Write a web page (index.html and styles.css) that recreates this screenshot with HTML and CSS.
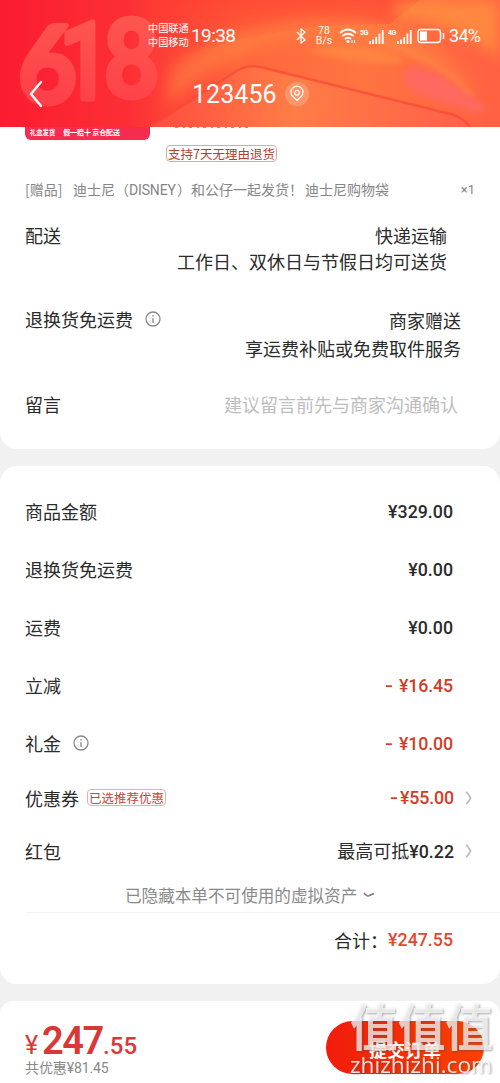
FILE: index.html
```html
<!DOCTYPE html>
<html lang="zh-CN">
<head>
<meta charset="utf-8">
<title>提交订单</title>
<link rel="stylesheet" href="styles.css">
</head>
<body>
<main class="screen">
  <header class="header">
    <svg class="header-art" viewBox="0 0 500 127" preserveAspectRatio="none" aria-hidden="true">
      <defs>
        <linearGradient id="base" x1="0" y1="0" x2="1" y2="0">
          <stop offset="0" stop-color="#fb1c30"/><stop offset=".26" stop-color="#fc2f35"/>
          <stop offset=".48" stop-color="#ff663c"/><stop offset=".72" stop-color="#ff7441"/><stop offset="1" stop-color="#ff6042"/>
        </linearGradient>
        <linearGradient id="top" x1="0" y1="0" x2="0" y2="1">
          <stop offset="0" stop-color="#ff3b30" stop-opacity=".6"/><stop offset="1" stop-color="#ff4034" stop-opacity="0"/>
        </linearGradient>
        <linearGradient id="panel" x1="0" y1="0" x2="1" y2="0">
          <stop offset="0" stop-color="#ff4b3e"/><stop offset=".45" stop-color="#ff7d46"/><stop offset="1" stop-color="#ff6048"/>
        </linearGradient>
        <linearGradient id="digit" x1="0" y1="0" x2="0" y2="1">
          <stop offset="0" stop-color="#ff6658"/><stop offset="1" stop-color="#ff414c"/>
        </linearGradient>
        <filter id="soft" x="-20%" y="-20%" width="140%" height="140%"><feGaussianBlur stdDeviation="3"/></filter>
        <filter id="haze" x="-20%" y="-50%" width="140%" height="200%"><feGaussianBlur stdDeviation="7"/></filter>
      </defs>
      <rect width="500" height="127" fill="url(#base)"/>
      <path d="M150 0H420L390 24Q260 22 145 70Z" fill="url(#top)"/>
      <path d="M170 70Q240 14 340 18Q430 24 485 100Q410 40 330 38Q240 36 165 108Z" fill="#ff8c45" opacity=".5" filter="url(#haze)"/>
      <path d="M400 0H500V60Q465 25 390 16Z" fill="#ff9140" opacity=".8" filter="url(#haze)"/>
      <path d="M304 50Q348 38 400 56Q410 61 395 64Q350 64 304 50Z" fill="#ff8842" opacity=".8" filter="url(#soft)"/>
      <path d="M405 72Q416 61 442 77L480 102Q494 112 476 112L427 97Q398 87 405 72Z" fill="#ff6961" filter="url(#soft)"/>
      <path d="M380 41Q440 60 472 95" fill="none" stroke="#ffac52" stroke-width="2" opacity=".7" filter="url(#soft)"/>
      <path d="M150 127L238 70Q252 63 268 69L451 114Q464 118 470 127Z" fill="url(#panel)"/>
      <path d="M150 127L238 70Q252 63 268 69L451 114Q464 118 470 127" fill="none" stroke="#f74834" stroke-width="2.5" opacity=".7"/>
      <g class="festival" fill="url(#digit)" stroke="url(#digit)" stroke-width="5" stroke-linejoin="round" opacity=".8">
        <text class="six" x="18" y="103" font-size="108" textLength="59" lengthAdjust="spacingAndGlyphs">6</text>
        <text x="59" y="99" font-size="107" textLength="52" lengthAdjust="spacingAndGlyphs">1</text>
        <text x="103" y="97" font-size="109" textLength="57" lengthAdjust="spacingAndGlyphs">8</text>
      </g>
    </svg>
    <div class="status">
      <div class="carriers"><span>中国联通</span><span>中国移动</span></div>
      <time class="clock">19:38</time>
      <svg class="bluetooth" viewBox="0 0 10 16"><path d="M1 4L9 12L5 15V1L9 4L1 12"/></svg>
      <div class="speed"><span>78</span><span>B/s</span></div>
      <svg class="wifi" viewBox="0 0 18 16"><path d="M1 5Q9-2 17 5M3.5 8Q9 3.5 14.5 8M6 11Q9 8.5 12 11"/><circle cx="9" cy="13.5" r="1.5"/><path class="tiny" d="M13 12V15M15.5 12V15"/></svg>
      <div class="signal"><small>5G</small><svg viewBox="0 0 15 15"><path d="M1 15V12M4 15V10.5M7.2 15V8M10.4 15V4.500M13.7 15V1"/></svg></div>
      <div class="signal"><small>4G</small><svg viewBox="0 0 15 15"><path d="M1 15V12M4 15V10.5M7.2 15V8M10.4 15V4.500M13.7 15V1"/></svg></div>
      <svg class="battery" viewBox="0 0 28 16"><rect x="1" y="1.500" width="22.500" height="13" rx="3"/><rect class="charge" x="3" y="3.500" width="7" height="9"/><path d="M26.500 5V11"/></svg>
      <span class="percent">34%</span>
    </div>
    <div class="titlebar">
      <svg class="back" viewBox="0 0 14 28"><path d="M12 2L2 14L12 26"/></svg>
      <h1>123456</h1>
      <svg class="pin" viewBox="0 0 24 24"><circle class="halo" cx="12" cy="12" r="12"/><path d="M12 18.500L7.700 14.300A6 6 0 1 1 16.300 14.300Z"/><circle cx="12" cy="10.800" r="2.300"/></svg>
    </div>
  </header>

  <section class="card delivery">
    <div class="product">
      <div class="thumb"><span>礼盒发货</span><span class="promise">假一赔十 京仓配送</span></div>
      <div class="product-info">
        <div class="clipped"></div>
        <span class="tag">支持7天无理由退货</span>
      </div>
    </div>
    <div class="gift"><span class="gift-label">[赠品]</span><span class="gift-name">迪士尼（<span class="latin">DISNEY</span>）和公仔一起发货！</span><span>迪士尼购物袋</span><span class="count">×1</span></div>
    <div class="ship"><span>配送</span><p>快递运输<br>工作日、双休日与节假日均可送货</p></div>
    <div class="returns"><span class="label">退换货免运费 <svg class="info" viewBox="0 0 16 16"><circle cx="8" cy="8" r="7"/><path d="M8 7V12M8 4V5.500"/></svg></span><p>商家赠送<br>享运费补贴或免费取件服务</p></div>
    <div class="message"><span>留言</span><span class="placeholder">建议留言前先与商家沟通确认</span></div>
  </section>

  <section class="card bill">
    <div class="row"><span>商品金额</span><b>¥329.00</b></div>
    <div class="row"><span>退换货免运费</span><b>¥0.00</b></div>
    <div class="row"><span>运费</span><b>¥0.00</b></div>
    <div class="row"><span>立减</span><b class="minus"><i>-</i>¥16.45</b></div>
    <div class="row"><span class="label">礼金 <svg class="info" viewBox="0 0 16 16"><circle cx="8" cy="8" r="7"/><path d="M8 7V12M8 4V5.500"/></svg></span><b class="minus"><i>-</i>¥10.00</b></div>
    <div class="row link coupon"><span class="label">优惠券 <em class="tag picked">已选推荐优惠</em></span><b class="minus"><i class="tight">-</i>¥55.00</b><svg class="more" viewBox="0 0 7 14"><path d="M1 1Q3 2 5.500 7Q3 12 1 13"/></svg></div>
    <div class="row link"><span>红包</span><span class="red-value">最高可抵<b>¥0.22</b></span><svg class="more" viewBox="0 0 7 14"><path d="M1 1Q3 2 5.500 7Q3 12 1 13"/></svg></div>
    <div class="hidden-assets">已隐藏本单不可使用的虚拟资产<svg viewBox="0 0 12 6"><path d="M1 1L3.500 3.500Q5 4.700 6.500 3.500L11 1.500"/></svg></div>
    <div class="total">合计：<b>¥247.55</b></div>
  </section>

  <section class="card next"></section>
  <footer class="pay">
    <div><div class="price"><small>¥</small><strong>247</strong><span>.55</span></div><div class="saved">共优惠¥81.45</div></div>
    <button class="submit">提交订单</button>
  </footer>
  <svg class="watermark" viewBox="0 0 156 83">
    <text x="6" y="46" class="mark" textLength="143" lengthAdjust="spacingAndGlyphs">值值值</text>
    <text x="6" y="73" class="domain" textLength="142" lengthAdjust="spacingAndGlyphs">zhizhizhi.com</text>
  </svg>
</main>
</body>
</html>
```
FILE: styles.css
```css
* { box-sizing: border-box; }
body { margin: 0; }
p, h1 { margin: 0; font-weight: 400; }
svg { flex: none; fill: none; display: block; }
.screen {
  position: relative;
  width: 500px;
  height: 1083px;
  display: flex;
  flex-direction: column;
  overflow: hidden;
  background: #f1f1f1;
  color: #2b2b2b;
  font: 18px/26px "Noto Sans CJK SC", sans-serif;
  white-space: nowrap;
}
.header { position: relative; height: 127px; flex: none; color: #fff; }
.header-art { position: absolute; inset: 0; width: 500px; height: 127px; }
.festival { font-family: Roboto, sans-serif; font-weight: 500; }
.six { font-family: Lato, sans-serif; font-weight: 700; }
.status {
  position: relative;
  height: 72px;
  padding-left: 148px;
  display: flex;
  align-items: center;
  font-family: Roboto, "Noto Sans CJK SC", sans-serif;
}
.carriers { display: flex; flex-direction: column; width: 43px; font-size: 10.2px; line-height: 14.5px; }
.clock { width: 105px; font-size: 19px; letter-spacing: -.6px; }
.bluetooth { width: 10px; height: 16px; stroke: #fff; stroke-width: 1.2; }
.speed { width: 18px; margin-left: 9px; display: flex; flex-direction: column; text-align: center; font-size: 10.5px; line-height: 10px; }
.wifi { width: 18px; height: 16px; margin-left: 6px; stroke: #fff; stroke-width: 1.7; }
.wifi circle { fill: #fff; stroke: none; }
.wifi .tiny { stroke-width: 1; }
.signal { display: flex; align-items: flex-start; margin-left: 3px; width: 25px; }
.signal small { width: 9px; font-size: 7px; line-height: 8px; letter-spacing: -.6px; font-weight: 700; }
.signal svg { width: 15px; height: 15px; stroke: #fff; stroke-width: 1.8; }
.battery { width: 28px; height: 16px; margin-left: 4px; stroke: #fff; stroke-width: 1.5; }
.battery .charge { fill: #fff; stroke: none; }
.percent { margin-left: 4px; font-size: 18px; letter-spacing: -.7px; }
.titlebar { position: relative; height: 44px; padding-left: 29px; display: flex; align-items: center; }
.back { width: 14px; height: 28px; stroke: #fff; stroke-width: 2.4; stroke-linecap: round; }
.titlebar h1 { width: 86px; margin-left: 149px; padding-top: 2px; font: 25px/30px Roboto, sans-serif; letter-spacing: .05px; }
.pin { width: 24px; height: 24px; margin-left: 7px; stroke: #fff; stroke-width: 1.2; }
.pin .halo { fill: #fff; fill-opacity: .2; stroke: none; }
.card { flex: none; background: #fff; border-radius: 17px; }
.delivery { height: 322px; border-radius: 0 0 17px 17px; padding: 0 25px; }
.product { height: 49px; display: flex; align-items: flex-start; gap: 16px; }
.thumb {
  width: 125px;
  height: 13px;
  border-radius: 0 0 6px 6px;
  background: #f42d4f;
  color: #fff;
  display: flex;
  gap: 8px;
  padding-left: 5px;
  font: 700 6.3px/11px "Noto Sans CJK SC", sans-serif;
}
.promise { font-size: 7px; letter-spacing: -.1px; }
.product-info { display: flex; flex-direction: column; align-items: flex-start; }
.clipped {
  width: 78px;
  height: 1px;
  margin: 0 0 17px 9px;
  background: repeating-linear-gradient(90deg, #c08078 0 3px, transparent 3px 8px, #c08078 8px 10px, transparent 10px 14px);
}
.tag {
  height: 17px;
  padding: 0 1px;
  border: 1px solid #d9aaa0;
  border-radius: 4px;
  color: #b5402f;
  font-size: 12.5px;
  line-height: 15px;
  font-style: normal;
}
.gift { height: 28px; display: flex; font-size: 14px; line-height: 27px; color: #858585; }
.gift-label { width: 48px; }
.gift-name { width: 232px; }
.gift-name .latin { display: inline-block; width: 48px; font-family: Roboto, sans-serif; letter-spacing: -.15px; }
.count { margin-left: auto; font: 13px/28px Roboto, sans-serif; }
.ship { height: 85px; padding: 18px 28px 0 0; display: flex; justify-content: space-between; text-align: right; }
.returns { height: 84px; padding: 17px 14px 0 0; display: flex; justify-content: space-between; text-align: right; }
.returns p { line-height: 28px; }
.label { height: 26px; display: flex; align-items: center; gap: 12px; }
.info { width: 16px; height: 16px; stroke: #888; stroke-width: 1.3; }
.message { height: 76px; padding: 18px 17px 0 0; display: flex; justify-content: space-between; }
.placeholder { color: #bdbdbd; }
.bill { height: 518px; margin-top: 17px; padding: 16px 0 0 25px; }
.row { height: 58px; padding-right: 47px; display: flex; align-items: center; justify-content: space-between; }
.row b, .total b { font: 500 17.8px/26px Roboto, sans-serif; }
.row > b { padding-top: 1px; }
.minus { color: #d33c27; }
.row > .minus { letter-spacing: -.15px; }
.minus i { display: inline-block; width: 14px; font-style: normal; transform: scaleX(1.3); transform-origin: left; }
.minus .tight { width: 10px; }
.row.link { height: 54px; padding-right: 28px; justify-content: flex-start; }
.row.link > :nth-child(2) { margin-left: auto; padding: 0 0 1px; }
.row.coupon { height: 52px; }
.row.coupon .label { gap: 8px; }
.picked { font-size: 12.5px; border-color: #e8b0a3; color: #c44835; line-height: 15px; margin-bottom: 1px; }
.more { width: 7px; height: 14px; margin-left: 11px; stroke: #bcbcbc; stroke-width: 1.7; }
.hidden-assets { height: 35px; padding: 0 0 0 100px; display: flex; align-items: center; gap: 6px; font-size: 16.6px; color: #898989; border-bottom: 1px solid #f3f3f3; }
.hidden-assets svg { width: 12px; height: 6px; stroke: #777; stroke-width: 1.5; }
.total { height: 53px; padding-right: 47px; display: flex; align-items: center; justify-content: flex-end; }
.total b { color: #de4934; padding-top: 1px; }
.next { height: 13px; margin-top: 17px; border-radius: 14px 14px 0 0; }
.pay { height: 69px; flex: none; padding: 0 16px 0 25px; background: #fff; display: flex; align-items: flex-start; justify-content: space-between; }
.price { height: 44px; display: flex; align-items: baseline; color: #d93836; font-family: Roboto, sans-serif; line-height: 54px; }
.price small { width: 17px; font-size: 25px; }
.price strong { width: 61px; font-size: 38px; font-weight: 600; letter-spacing: -1.4px; }
.price span { font-size: 24px; font-weight: 500; letter-spacing: .1px; }
.saved { font: 14px/20px Roboto, "Noto Sans CJK SC", sans-serif; letter-spacing: -.1px; color: #888; }
.submit { width: 158px; height: 53px; margin-top: 7px; padding: 0; border: 0; border-radius: 27px; color: #fff; background: linear-gradient(90deg, #f01c0c, #fa4200); font: 700 18px/57px "Noto Sans CJK SC", sans-serif; }
.watermark { position: absolute; left: 344px; top: 1000px; width: 156px; height: 83px; filter: drop-shadow(1px 1px .8px rgba(70, 70, 70, .65)); }
.mark { font: 700 50px "Noto Sans CJK SC", sans-serif; fill: #fff; fill-opacity: .72; }
.domain { font: 500 22.5px "Open Sans", sans-serif; fill: #fff; fill-opacity: .85; }
```
